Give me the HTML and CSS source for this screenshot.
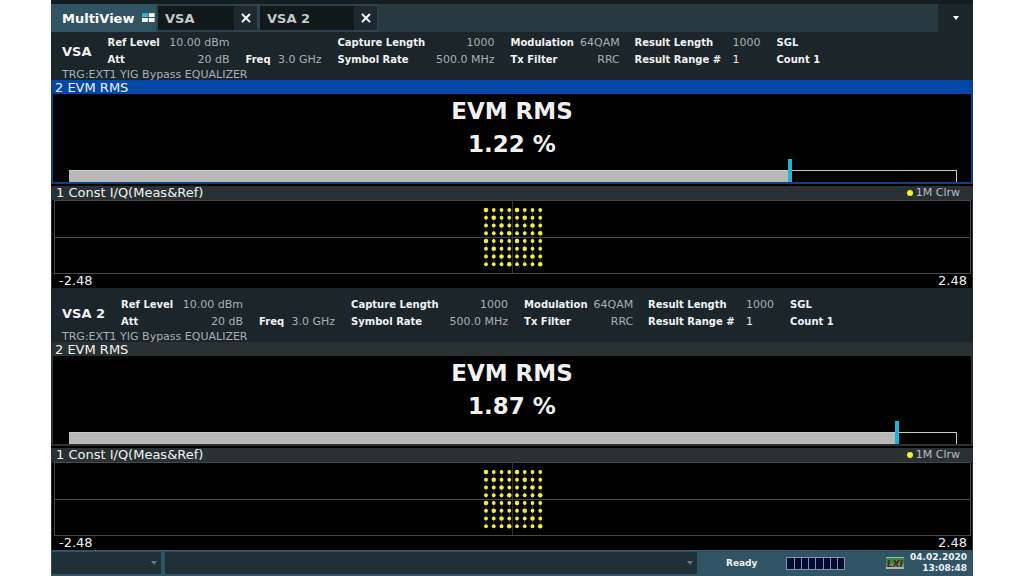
FILE: index.html
```
<!DOCTYPE html>
<html lang="en">
<head>
    <meta charset="UTF-8">
    <meta name="viewport" content="width=device-width, initial-scale=1.0">
    <link rel="stylesheet" href="styles.css">
    <title>MultiView</title>
</head>
<body>
    <div class="screen">
        <nav class="tabs">
            <button class="tab active">MultiView
                <svg width="14" height="10" viewBox="0 0 14 10">
                    <rect x="0" y="0" width="6" height="4" fill="#35b6d6"/>
                    <rect x="7" y="0" width="6" height="4" fill="#fff"/>
                    <rect x="0" y="5" width="6" height="4" fill="#fff"/>
                    <rect x="7" y="5" width="6" height="4" fill="#fff"/>
                </svg>
            </button>
            <div class="tab-group">
                <button class="tab">VSA</button>
                <button class="close" aria-label="Close VSA">
                    <svg width="10" height="10" viewBox="0 0 10 10"><path d="M1 1L9 9M9 1L1 9"/></svg>
                </button>
            </div>
            <div class="tab-group wide">
                <button class="tab">VSA 2</button>
                <button class="close" aria-label="Close VSA 2">
                    <svg width="10" height="10" viewBox="0 0 10 10"><path d="M1 1L9 9M9 1L1 9"/></svg>
                </button>
            </div>
            <button class="more" aria-label="More tabs">
                <svg width="6" height="4" viewBox="0 0 6 4"><path d="M0 0H6L3 4Z" fill="#fff"/></svg>
            </button>
        </nav>

        <section class="channel selected">
            <header class="info">
                <div class="params">
                    <h2>VSA</h2>
                    <dl class="level"><dt>Ref Level</dt><dd>10.00 dBm</dd><dt>Att</dt><dd>20 dB</dd></dl>
                    <dl class="freq"><dt>Freq</dt><dd>3.0 GHz</dd></dl>
                    <dl class="capture"><dt>Capture Length</dt><dd>1000</dd><dt>Symbol Rate</dt><dd>500.0 MHz</dd></dl>
                    <dl class="modulation"><dt>Modulation</dt><dd>64QAM</dd><dt>Tx Filter</dt><dd>RRC</dd></dl>
                    <dl class="result"><dt>Result Length</dt><dd>1000</dd><dt>Result Range #</dt><dd class="bright">1</dd></dl>
                    <div class="sweep">SGL<br>Count 1</div>
                </div>
                <p>TRG:EXT1 YIG Bypass EQUALIZER</p>
            </header>
            <div class="window evm">
                <h3>2 EVM RMS</h3>
                <div class="reading">EVM RMS<br>1.22 %</div>
                <div class="bar"><div class="fill" style="width: 81.5%"></div></div>
            </div>
            <div class="window const">
                <h3>1 Const I/Q(Meas&amp;Ref) <span class="trace">1M Clrw</span></h3>
                <div class="plot"></div>
                <div class="axis"><span>-2.48</span><span>2.48</span></div>
            </div>
        </section>

        <section class="channel">
            <header class="info">
                <div class="params">
                    <h2>VSA 2</h2>
                    <dl class="level"><dt>Ref Level</dt><dd>10.00 dBm</dd><dt>Att</dt><dd>20 dB</dd></dl>
                    <dl class="freq"><dt>Freq</dt><dd>3.0 GHz</dd></dl>
                    <dl class="capture"><dt>Capture Length</dt><dd>1000</dd><dt>Symbol Rate</dt><dd>500.0 MHz</dd></dl>
                    <dl class="modulation"><dt>Modulation</dt><dd>64QAM</dd><dt>Tx Filter</dt><dd>RRC</dd></dl>
                    <dl class="result"><dt>Result Length</dt><dd>1000</dd><dt>Result Range #</dt><dd class="bright">1</dd></dl>
                    <div class="sweep">SGL<br>Count 1</div>
                </div>
                <p>TRG:EXT1 YIG Bypass EQUALIZER</p>
            </header>
            <div class="window evm">
                <h3>2 EVM RMS</h3>
                <div class="reading">EVM RMS<br>1.87 %</div>
                <div class="bar"><div class="fill" style="width: 93.6%"></div></div>
            </div>
            <div class="window const">
                <h3>1 Const I/Q(Meas&amp;Ref) <span class="trace">1M Clrw</span></h3>
                <div class="plot"></div>
                <div class="axis"><span>-2.48</span><span>2.48</span></div>
            </div>
        </section>

        <footer class="status">
            <label class="drop"><select aria-label="Softkey"></select></label>
            <label class="drop message"><select aria-label="Messages"></select></label>
            <div class="state">
                <span class="ready">Ready</span>
                <div class="progress"><i></i><i></i><i></i><i></i><i></i><i></i><i></i><i></i></div>
                <svg class="lxi" width="18" height="12" viewBox="0 0 18 12">
                    <rect width="18" height="12" fill="#a9b8a4"/>
                    <rect y="1" width="18" height="6" fill="#2f8a4c"/>
                    <rect y="7" width="18" height="3" fill="#5f9a62"/>
                    <text x="9" y="10" text-anchor="middle">LXI</text>
                </svg>
                <div class="clock">04.02.2020<br>13:08:48</div>
            </div>
        </footer>
    </div>
    <script>
        // 64QAM constellation, 8 x 8 symbols
        function constellation(){
            var size=62;
            var step=7.75;
            var lines='';
            var dots='';
            for(var i=0;i<8;i++)
            {
                var x=4+i*step;
                lines+='<path d="M'+x+' 4V58" stroke="#3a2c18" stroke-width="1"/>';
                for(var j=0;j<8;j++)
                {
                    var y=4+j*step;
                    var r=(i*3+j*5)%4==0 ? 2.3 : 1.9;
                    dots+='<circle cx="'+x+'" cy="'+y+'" r="'+r+'" fill="#f2ec3c"/>';
                }
            }
            return '<svg width="'+size+'" height="'+size+'" viewBox="0 0 62 62">'+lines+dots+'</svg>';
        };

        var plots=document.querySelectorAll('.plot');
        for(var i=0;i<plots.length;i++)
        {
            plots[i].innerHTML=constellation();
        }
    </script>
</body>
</html>
```
FILE: styles.css
```
*{
    box-sizing: border-box;
}
body{
    margin: 0;
    background: #fff;
    font-family: "DejaVu Sans", Verdana, sans-serif;
    color: #f0f2f2;
}
h2,h3,p,dl,dd{
    margin: 0;
}
button,select{
    font: inherit;
    color: inherit;
    border: 0;
    border-radius: 0;
    margin: 0;
    padding: 0;
    background: none;
}
svg{
    display: block;
}
.screen{
    min-height: 100vh;
    margin: 0 51px;
    display: flex;
    flex-direction: column;
    background: #000;
}

/* tabs */
.tabs{
    display: flex;
    height: 32px;
    border-top: 4px solid #131c1f;
    background: #273a40;
    font-size: 13px;
    font-weight: bold;
}
.tab{
    text-align: left;
    padding: 0 0 0 7px;
    color: #c4c8c8;
}
.tab.active{
    display: flex;
    align-items: center;
    gap: 8px;
    width: 105px;
    padding-left: 11px;
    color: #fff;
    background: #305464;
}
.tab-group{
    display: flex;
    width: 102px;
    border: 2px solid #2b434c;
    border-right-width: 1px;
    background: #12191b;
}
.tab-group.wide{
    width: 120px;
}
.tab-group .tab{
    flex: 1;
}
.close{
    display: grid;
    place-items: center;
    width: 23px;
    background: #1d292e;
}
.close path{
    fill: none;
    stroke: #fff;
    stroke-width: 2;
}
.more{
    display: grid;
    place-items: center;
    width: 35px;
    margin-left: auto;
    background: #1b252a;
}

/* channel info */
.info{
    padding: 8px 10px 0 11px;
    background: #1b252a;
}
.selected .info{
    padding-top: 2px;
}
.params{
    display: flex;
    gap: 16px;
    font-size: 11px;
    line-height: 17px;
}
.info h2{
    align-self: center;
    font-size: 13px;
}
.info dl{
    display: grid;
    grid-template-columns: auto 1fr;
    align-content: end;
    column-gap: 6px;
}
.info dt,.sweep{
    font-size: 10px;
    font-weight: bold;
}
.info dd{
    text-align: right;
    color: #a9afb2;
}
.info .bright{
    color: #f0f2f2;
}
.level{
    width: 122px;
}
.freq{
    width: 76px;
}
.capture{
    width: 157px;
}
.modulation{
    width: 108px;
}
.info .result{
    width: 126px;
    grid-template-columns: 92px 1fr;
}
.info .result dd{
    text-align: left;
}
.info p{
    padding-top: 1px;
    font-size: 11px;
    line-height: 11px;
    color: #a9afb2;
}

/* result windows */
.window{
    border: 1px solid #2b3133;
}
.window h3{
    display: flex;
    justify-content: space-between;
    padding: 0 12px 0 4px;
    font-size: 13px;
    font-weight: normal;
    line-height: 14px;
    background: #2a3133;
}
.evm{
    height: 104px;
    display: flex;
    flex-direction: column;
    border-width: 0 2px 2px;
}
.evm h3{
    padding: 2px 12px 0 2px;
    line-height: 12px;
}
.selected .evm{
    border-color: #123f7d;
}
.selected .evm h3{
    background: #0347a8;
}
.reading{
    padding-top: 1px;
    text-align: center;
    font-size: 23px;
    font-weight: bold;
    line-height: 33px;
}
.bar{
    height: 12px;
    margin: auto 14px 0 16px;
    border: solid #c8c8c8;
    border-width: 1px 1px 0 0;
}
.fill{
    position: relative;
    height: 100%;
    background: #b8b8b8;
}
.fill::after{
    content: "";
    position: absolute;
    right: 0;
    bottom: 0;
    width: 4px;
    height: 23px;
    background: #20b4d2;
}
.const{
    margin-top: 2px;
    border-width: 0 1px;
}
.trace{
    display: flex;
    align-items: center;
    gap: 3px;
    font-size: 11px;
    color: #b9bfc1;
}
.trace::before{
    content: "";
    width: 6px;
    height: 6px;
    border-radius: 50%;
    background: #fdf31c;
}
.plot{
    display: grid;
    place-items: center;
    height: 74px;
    margin: 0 1px 0 2px;
    border: 1px solid #474747;
    background:
        linear-gradient(#474747, #474747) center / 100% 1px no-repeat,
        linear-gradient(#333, #333) center / 1px 100% no-repeat;
}
.axis{
    display: flex;
    justify-content: space-between;
    padding: 0 5px 0 7px;
    font-size: 13px;
    line-height: 14px;
}

/* status bar */
.status{
    flex: 1;
    display: flex;
    gap: 4px;
    min-height: 26px;
    padding: 2px 6px 2px 1px;
    background: #305464;
    font-size: 9px;
    font-weight: bold;
}
.drop{
    display: grid;
    align-items: center;
    width: 109px;
    background: #1e2f36;
}
.drop select{
    grid-area: 1 / 1;
    width: 100%;
    height: 100%;
    appearance: none;
}
.drop::after{
    content: "";
    grid-area: 1 / 1;
    justify-self: end;
    margin-right: 4px;
    border: 3px solid transparent;
    border-top: 4px solid #66787f;
    border-bottom: 0;
    pointer-events: none;
}
.message{
    flex: 1;
}
.state{
    display: flex;
    align-items: center;
    width: 266px;
    padding-left: 25px;
}
.progress{
    display: flex;
    gap: 1px;
    width: 59px;
    height: 13px;
    margin-left: 29px;
    padding: 1px;
    background: #7d94b4;
}
.progress i{
    flex: 1;
    background: #050a30;
}
.lxi{
    margin-left: auto;
}
.lxi text{
    font-size: 9px;
    font-style: italic;
    font-weight: bold;
    fill: #5e1a1c;
}
.clock{
    margin-left: 6px;
    text-align: right;
    line-height: 11px;
}
```
